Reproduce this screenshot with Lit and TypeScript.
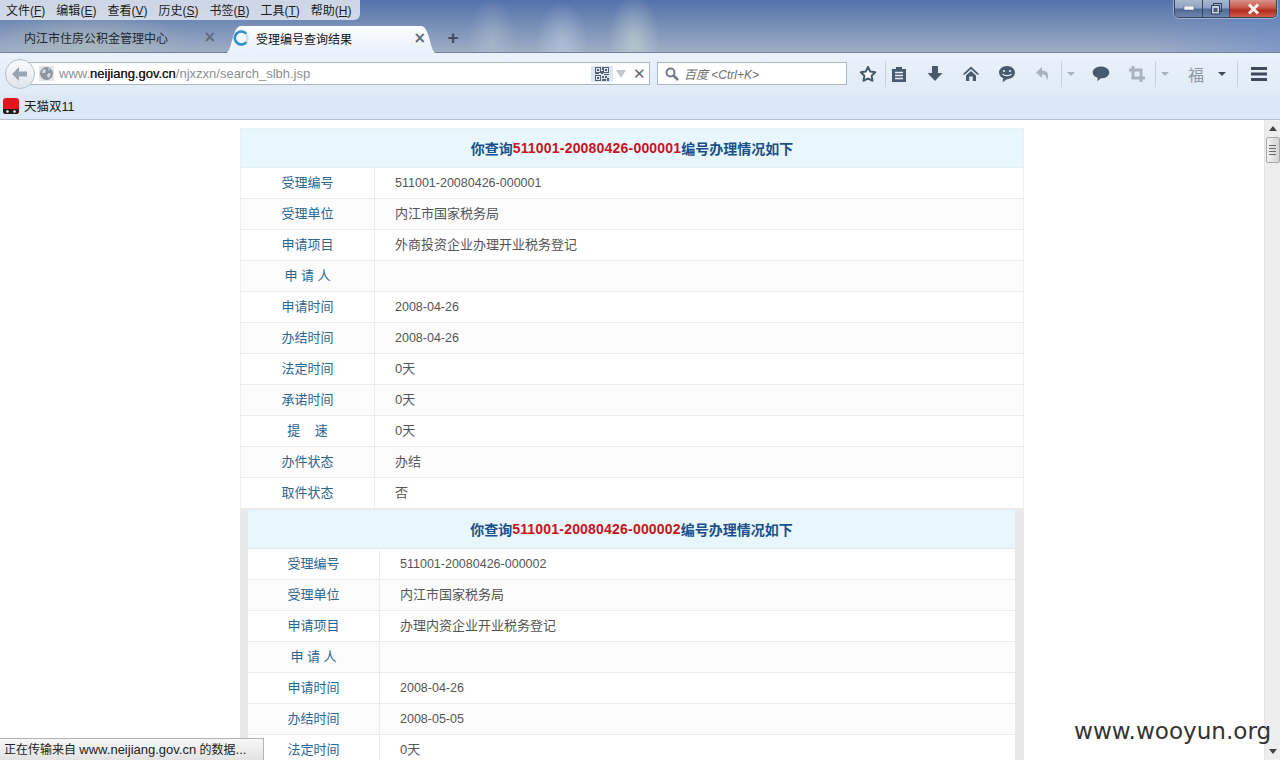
import { LitElement, html, css, svg, unsafeCSS } from "lit";
import { customElement } from "lit/decorators.js";

const FAMILY = unsafeCSS(`"Liberation Sans", "Noto Sans CJK SC", sans-serif`);

interface Row { label: string; value: string; num?: boolean; }

const rows = (id: string, unit: string, item: string, t1: string, t2: string): Row[] => [
  { label: "受理编号", value: id, num: true },
  { label: "受理单位", value: unit },
  { label: "申请项目", value: item },
  { label: "申\u00a0请\u00a0人", value: "" },
  { label: "申请时间", value: t1, num: true },
  { label: "办结时间", value: t2, num: true },
  { label: "法定时间", value: "0天" },
  { label: "承诺时间", value: "0天" },
  { label: "提\u00a0\u00a0\u00a0\u00a0速", value: "0天" },
  { label: "办件状态", value: "办结" },
  { label: "取件状态", value: "否" },
];

const first = rows("511001-20080426-000001", "内江市国家税务局", "外商投资企业办理开业税务登记", "2008-04-26", "2008-04-26");
const second = rows("511001-20080426-000002", "内江市国家税务局", "办理内资企业开业税务登记", "2008-04-26", "2008-05-05");

const I = "#4a5a6e";
const F = "#a9b3bf";

const icons = {
  star: svg`<svg width="18" height="18" viewBox="0 0 18 18"><path d="M9 2l2.2 4.6 5 .7-3.6 3.5.9 5L9 13.4 4.500 15.800l.9-5L1.800 7.300l5-.7z" fill="#fff" stroke="${I}" stroke-width="2" stroke-linejoin="round"/></svg>`,
  clip: svg`<svg width="16" height="18" viewBox="0 0 16 18"><path d="M1 4h4V2h6v2h4v13H1z" fill="${I}"/><path d="M4 7.500h8M4 10.500h8M4 13.500h8" stroke="#e6eef8" stroke-width="1.500"/></svg>`,
  down: svg`<svg width="16" height="18" viewBox="0 0 16 18"><path d="M5 1h6v7h4.500L8 16 .500 8H5z" fill="${I}"/></svg>`,
  home: svg`<svg width="18" height="18" viewBox="0 0 18 18"><path d="M9 1.500L.500 9.500h2.500L9 4l6 5.500h2.500z" fill="${I}"/><path d="M4 10.500L9 6l5 4.500V16h-3.200v-4.500H7.200V16H4z" fill="${I}"/></svg>`,
  smile: svg`<svg width="18" height="18" viewBox="0 0 18 18"><path d="M9 1c4.500 0 8 2.900 8 6.600s-3.500 6.600-8 6.600l-4.500 3 .8-3.800C2.800 12.300 1 10.100 1 7.600 1 3.900 4.500 1 9 1z" fill="${I}"/><circle cx="6" cy="6" r="1.100" fill="#e6eef8"/><circle cx="12" cy="6" r="1.100" fill="#e6eef8"/><path d="M4.500 9c1.500 2.200 7.500 2.200 9 0" stroke="#e6eef8" stroke-width="1.300" fill="none"/></svg>`,
  undo: svg`<svg width="16" height="16" viewBox="0 0 16 16"><path d="M7 1L1 6.500 7 12V8.500c3 0 4.500 1.500 5 6 2-4.500 2.300-9.500-5-10z" fill="${F}"/></svg>`,
  chat: svg`<svg width="18" height="16" viewBox="0 0 18 16"><path d="M9 .500c4.500 0 8.300 2.600 8.300 5.900S13.500 12.300 9 12.300l-3.800 3 .6-3.500C3 11 .700 9 .700 6.400.700 3.100 4.500.500 9 .500z" fill="${I}"/></svg>`,
  crop: svg`<svg width="16" height="16" viewBox="0 0 16 16"><path d="M4 0v12h12M0 4h12v12" fill="none" stroke="${F}" stroke-width="3"/></svg>`,
  menu: svg`<svg width="18" height="14" viewBox="0 0 18 14"><path d="M1 0h16v3H1zM1 5.500h16v3H1zM1 11h16v3H1z" fill="#3c4a5c"/></svg>`,
};

@customElement("app-root")
export class AppRoot extends LitElement {
  static styles = css`
    :host { display: block; width: 1280px; height: 760px; overflow: hidden; font-family: ${FAMILY}; }
    .win { position: relative; width: 1280px; height: 760px; display: flex; flex-direction: column; background: #fff; overflow: hidden; }

    .title {
      height: 53px; box-sizing: border-box; flex: none; display: flex; flex-direction: column; border-bottom: 1px solid #6d7f99;
      background:
        radial-gradient(ellipse 24px 44px at 492px 42px, rgba(178,196,206,.5), transparent),
        radial-gradient(ellipse 26px 42px at 562px 44px, rgba(190,210,228,.55), transparent),
        radial-gradient(ellipse 26px 48px at 634px 42px, rgba(200,216,212,.6), transparent),
        radial-gradient(ellipse 100px 30px at 90px 42px, rgba(180,195,190,.6), transparent),
        linear-gradient(90deg, transparent 1150px, rgba(100,135,200,.45) 1280px),
        linear-gradient(180deg, #5372ad 0%, #7189b4 40%, #a0aec6 100%);
    }
    .top { height: 25px; flex: none; display: flex; justify-content: space-between; align-items: flex-start; }
    .menus { height: 20px; display: flex; gap: 11px; padding: 0 6px 1px; box-sizing: border-box; width: 360px; align-items: center;
      background: rgba(232,236,243,.82); border-radius: 0 0 6px 0; font-size: 12px; color: #1c1c1c; white-space: nowrap; }
    .controls { display: flex; height: 17px; margin-right: 3px; border: 1px solid #39465c; border-top: none; border-radius: 0 0 5px 5px; overflow: hidden; box-shadow: 0 0 0 1px rgba(255,255,255,.35); }
    .controls div { display: flex; align-items: center; justify-content: center; border-left: 1px solid #39465c; box-sizing: border-box; }
    .controls div:first-child { border-left: none; }
    .cmin, .cmax { width: 27px; background: linear-gradient(180deg, #a9b7d0 0%, #90a2c2 45%, #52699a 55%, #6f85ad 100%); }
    .cclose { width: 47px; background: linear-gradient(180deg, #d8938a 0%, #c9574a 45%, #b22c1e 60%, #cf5a48 100%); }

    .tabs { height: 27px; display: flex; align-items: stretch; font-size: 12px; white-space: nowrap; }
    .tab { display: flex; align-items: center; box-sizing: border-box; padding-bottom: 2px; }
    .tab1 { width: 226px; padding-left: 24px; padding-right: 10px; justify-content: space-between; color: #1c2635; }
    .tab2 { position: relative; width: 210px; padding-left: 7px; padding-right: 10px; color: #111; margin-bottom: -1px; z-index: 1; }
    .tabbg { position: absolute; inset: 0; z-index: -1; }
    .tab2 .t { margin-left: 7px; flex: 1; }
    .x { color: #5d6a7c; font-size: 15px; font-weight: bold; line-height: 1; font-family: "DejaVu Sans", sans-serif; }
    .plus { width: 34px; display: flex; align-items: center; justify-content: center; color: #3f4d61; font-size: 19px; font-weight: bold; padding-bottom: 2px; box-sizing: border-box; }

    .nav { height: 41px; flex: none; box-sizing: border-box; display: flex; align-items: center; padding-left: 5px; background: linear-gradient(180deg, #eaf2fb, #dfebf8); }
    .back { width: 30px; height: 30px; flex: none; border-radius: 50%; background: linear-gradient(180deg, #fbfcfe, #dfe5ec); border: 1px solid #b5bfcb; box-sizing: border-box; display: flex; align-items: center; justify-content: center; position: relative; z-index: 1; }
    .url { width: 627px; height: 23px; flex: none; display: flex; align-items: center; background: #fff; border: 1px solid #adb6c3; box-sizing: border-box; font-size: 13px; margin-left: -12px; }
    .globe { width: 15px; height: 15px; margin-left: 15px; background: #e2e5ea; display: flex; }
    .addr { margin-left: 5px; flex: 1; color: #8a8f96; white-space: nowrap; }
    .addr b { font-weight: normal; color: #222; text-shadow: 0 0 .4px #222; }
    .qr { width: 22px; height: 16px; display: flex; align-items: center; justify-content: center; background: #dbe7f5; }
    .tri { width: 0; height: 0; margin: 0 7px 0 3px; border: 5px solid transparent; border-top: 8px solid #c3c8ce; border-bottom: none; }
    .ux { width: 14px; margin-right: 2px; color: #5f6872; font-size: 15px; font-weight: bold; font-family: "DejaVu Sans", sans-serif; }
    .search { width: 190px; height: 23px; margin-left: 7px; flex: none; display: flex; align-items: center; gap: 5px; padding-left: 7px; box-sizing: border-box; background: #fff; border: 1px solid #adb6c3; font-size: 12px; font-style: italic; color: #6f6f6f; }
    .tools { display: flex; align-items: center; height: 30px; margin-left: 4px; }
    .s { height: 24px; flex: none; display: flex; align-items: center; justify-content: center; }
    .w34 { width: 34px; } .w36 { width: 36px; } .w31 { width: 31px; padding-right: 5px; box-sizing: border-box; } .w16 { width: 16px; } .w18 { width: 18px; }
    .gap3 { margin-left: 3px; }
    .gap4 { margin-left: 4px; }
    .sep { width: 1px; height: 26px; flex: none; background: #c4d0de; }
    .sep8 { margin-left: 7px; margin-right: 3px; }
    .dd { width: 0; height: 0; border: 4px solid transparent; border-top: 4px solid #3c4a5c; border-bottom: none; }
    .dd.off { border-top-color: #a9b3bf; }
    .fu { color: #8d97a3; font-size: 16px; }

    .bm { height: 26px; flex: none; box-sizing: border-box; display: flex; align-items: center; gap: 5px; padding: 0 0 2px 3px; background: #dae8f7; border-bottom: 1px solid #b8c2cd; font-size: 12.500px; color: #1a1a1a; }

    .body { flex: 1; min-height: 0; display: flex; overflow: hidden; }
    .page { flex: 1; min-width: 0; padding: 8px 0 0 240px; box-sizing: border-box; }
    .sb { width: 16px; flex: none; background: #eeeeee; display: flex; flex-direction: column; align-items: center; border-left: 1px solid #e4e4e4; box-sizing: border-box; }
    .up { margin-top: 6px; width: 0; height: 0; border: 4px solid transparent; border-bottom: 5px solid #444; border-top: none; }
    .thumb { margin-top: 6px; width: 14px; height: 26px; border: 1px solid #a8a8a8; border-radius: 2px; box-sizing: border-box; background: linear-gradient(90deg, #f2f2f2, #d4d4d4); display: flex; flex-direction: column; justify-content: center; align-items: center; gap: 2px; }
    .thumb i { display: block; width: 7px; height: 1px; background: #666; }
    .dn { margin-top: auto; margin-bottom: 6px; width: 0; height: 0; border: 4px solid transparent; border-top: 5px solid #444; border-bottom: none; }

    .outer { width: 784px; }
    .t1 .h { height: 40px; border: 1px solid #eaf0f4; border-bottom-color: #e8eef2; }
    .h { box-sizing: border-box; display: flex; align-items: center; justify-content: center; background: #e8f6fd; font-size: 14px; font-weight: bold; color: #1a4f8c; }
    .h em { font-style: normal; color: #c8141c; letter-spacing: .2px; }
    .r { display: grid; height: 31px; box-sizing: border-box; border-bottom: 1px solid #ececec; background: #fff; font-size: 13px; }
    .r.alt { background: #fcfcfc; }
    .t1 .r { grid-template-columns: 134px 1fr; border-left: 1px solid #eeeeee; border-right: 1px solid #eeeeee; }
    .l { display: flex; align-items: center; justify-content: center; color: #2b6592; border-right: 1px solid #ececec; white-space: pre; padding-bottom: 4px; box-sizing: border-box; }
    .v { display: flex; align-items: center; padding-left: 20px; padding-bottom: 4px; box-sizing: border-box; color: #555; }
    .v.n { font-size: 12.500px; padding-bottom: 0; }
    .wrap { background: #e8e8e8; padding: 1px 9px 0 8px; height: 300px; box-sizing: border-box; }
    .t2 .h { height: 39px; border-bottom: 1px solid #dfe9ef; }
    .t2 .r { grid-template-columns: 132px 1fr; }

    .status { position: absolute; left: 0; bottom: 0; width: 264px; height: 22px; box-sizing: border-box; padding: 1px 0 0 4px; background: linear-gradient(180deg, #f7f7f7, #e3e3e3); border: 1px solid #b4b4b4; border-left: none; border-bottom: none; font-size: 12px; line-height: 20px; color: #222; white-space: nowrap; }
    .status span { font-size: 13px; }
    .mark { position: absolute; left: 1074px; top: 715px; font-family: "DejaVu Sans", sans-serif; font-size: 23.100px; line-height: 32px; color: #333; white-space: nowrap; }
  `;

  private table(list: Row[], no: string) {
    return html`
      <div class="h">你查询<em>511001-20080426-00000${no}</em>编号办理情况如下</div>
      ${list.map((r, i) => html`
        <div class="r ${i % 2 ? "alt" : ""}">
          <div class="l">${r.label}</div>
          <div class="v ${r.num ? "n" : ""}">${r.value}</div>
        </div>`)}
    `;
  }

  render() {
    const menus: [string, string][] = [["文件", "F"], ["编辑", "E"], ["查看", "V"], ["历史", "S"], ["书签", "B"], ["工具", "T"], ["帮助", "H"]];
    return html`
      <div class="win">
        <div class="title">
          <div class="top">
            <div class="menus">${menus.map(([a, b]) => html`<span>${a}(<u>${b}</u>)</span>`)}</div>
            <div class="controls">
              <div class="cmin"><svg width="12" height="5"><rect x="1" y="0" width="10" height="4" fill="#f4f6fa" stroke="#43506a" stroke-width=".5"/></svg></div>
              <div class="cmax"><svg width="13" height="12" viewBox="0 0 13 12"><rect x="3.500" y=".5" width="8" height="8" fill="none" stroke="#34425c"/><rect x="1.500" y="2.500" width="8" height="8.500" fill="#c6d0e2" stroke="#34425c"/><rect x="3.500" y="5" width="4" height="4" fill="#4d5f80"/></svg></div>
              <div class="cclose"><svg width="13" height="12" viewBox="0 0 13 12"><path d="M2 1.500l9 9M11 1.500l-9 9" stroke="#f6f1f0" stroke-width="3"/></svg></div>
            </div>
          </div>
          <div class="tabs">
            <div class="tab tab1"><span>内江市住房公积金管理中心</span><span class="x">×</span></div>
            <div class="tab tab2">
              <svg class="tabbg" width="210" height="28" viewBox="0 0 210 28"><defs><linearGradient id="tg" x1="0" y1="0" x2="0" y2="1"><stop offset="0" stop-color="#fbfdff"/><stop offset="1" stop-color="#e9f1fb"/></linearGradient></defs><path d="M0 28C6 28 6 1 15 1h180c9 0 9 27 15 27z" fill="url(#tg)"/></svg>
              <svg width="16" height="16" viewBox="0 0 16 16" style="flex:none"><circle cx="8" cy="8" r="6.500" fill="none" stroke="#c6e0f3" stroke-width="2.500"/><path d="M13.300 3.800A6.500 6.500 0 1 0 13.300 12.200" fill="none" stroke="#2f8fd0" stroke-width="2.500"/></svg>
              <span class="t">受理编号查询结果</span><span class="x">×</span>
            </div>
            <div class="plus">+</div>
          </div>
        </div>

        <div class="nav">
          <div class="back"><svg width="16" height="14" viewBox="0 0 16 14"><path d="M7 0L0 7l7 7V9.500h8v-5H7z" fill="#9aa5b1"/></svg></div>
          <div class="url">
            <div class="globe"><svg width="15" height="15" viewBox="0 0 15 15"><circle cx="7.500" cy="7.500" r="6.500" fill="#8f969e"/><path d="M4 3l3 1-1 3-3 0zM9 7l3 1-2 4-2-2zM9 2l2 1-1 2z" fill="#d8dce1"/></svg></div>
            <div class="addr">www.<b>neijiang.gov.cn</b>/njxzxn/search_slbh.jsp</div>
            <div class="qr"><svg width="14" height="14" viewBox="0 0 14 14"><g fill="none" stroke="#56616e" stroke-width="1"><rect x=".5" y=".5" width="5" height="5"/><rect x="8.500" y=".5" width="5" height="5"/><rect x=".5" y="8.500" width="5" height="5"/></g><path d="M2 2h2v2H2zM10 2h2v2h-2zM2 10h2v2H2zM7 0h1v3H7zM6 4h2v3H6zM0 6h4v1H0zM9 7h5v1H9zM7 9h2v2H7zM10 9h2v2h-2zM12 11h2v3h-2zM7 12h4v2H7z" fill="#56616e"/></svg></div>
            <div class="tri"></div>
            <div class="ux">✕</div>
          </div>
          <div class="search">
            <svg width="14" height="14" viewBox="0 0 14 14" style="flex:none"><circle cx="5.500" cy="5.500" r="4" fill="none" stroke="#707a86" stroke-width="2"/><path d="M8.500 8.500L13 13" stroke="#707a86" stroke-width="2.500"/></svg>
            <span>百度 &lt;Ctrl+K&gt;</span>
          </div>
          <div class="tools">
            <div class="s w34">${icons.star}</div>
            <div class="sep"></div>
            <div class="s w31">${icons.clip}</div>
            <div class="s w36">${icons.down}</div>
            <div class="s w36">${icons.home}</div>
            <div class="s w36">${icons.smile}</div>
            <div class="s w36">${icons.undo}</div>
            <div class="sep"></div>
            <div class="s w18"><div class="dd off"></div></div>
            <div class="s w36 gap3">${icons.chat}</div>
            <div class="s w36">${icons.crop}</div>
            <div class="sep"></div>
            <div class="s w18"><div class="dd off"></div></div>
            <div class="s w36 gap4"><span class="fu">福</span></div>
            <div class="s w16"><div class="dd"></div></div>
            <div class="sep sep8"></div>
            <div class="s w36">${icons.menu}</div>
          </div>
        </div>

        <div class="bm">
          <svg width="16" height="16" viewBox="0 0 16 16" style="flex:none"><rect width="16" height="16" rx="3" fill="#e3141b"/><path d="M0 11h16v2a3 3 0 0 1-3 3H3a3 3 0 0 1-3-3z" fill="#1d1d1d"/><circle cx="4.500" cy="13.500" r="1.300" fill="#f3f3f3"/><circle cx="11.500" cy="13.500" r="1.300" fill="#f3f3f3"/></svg>
          <span>天猫双11</span>
        </div>

        <div class="body">
          <div class="page">
            <div class="outer">
              <div class="t1">${this.table(first, "1")}</div>
              <div class="wrap"><div class="t2">${this.table(second, "2")}</div></div>
            </div>
          </div>
          <div class="sb">
            <div class="up"></div>
            <div class="thumb"><i></i><i></i><i></i><i></i></div>
            <div class="dn"></div>
          </div>
        </div>

        <div class="status">正在传输来自 <span>www.neijiang.gov.cn</span> 的数据<span>...</span></div>
        <div class="mark">www.wooyun.org</div>
      </div>
    `;
  }
}
